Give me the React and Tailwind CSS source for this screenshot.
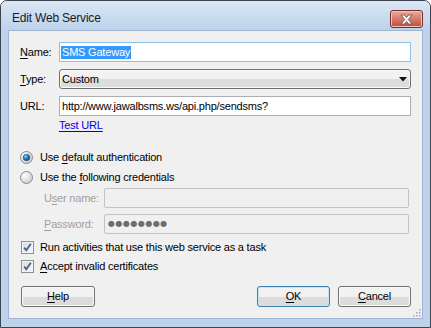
import React from 'react'

const font = { fontFamily: '"Liberation Sans", Arial, sans-serif' }

function U({ children }) {
  return <span className="underline underline-offset-[2px]">{children}</span>
}

function Radio({ checked }) {
  return (
    <svg width="13" height="13" viewBox="0 0 13 13" className="shrink-0">
      <defs>
        <radialGradient id={checked ? 'rg1' : 'rg0'} cx="0.35" cy="0.3" r="0.8">
          <stop offset="0" stopColor="#ffffff" />
          <stop offset="1" stopColor="#c8c8c8" />
        </radialGradient>
        <radialGradient id="dot" cx="0.35" cy="0.3" r="0.8">
          <stop offset="0" stopColor="#8fd3f7" />
          <stop offset="0.5" stopColor="#1a7fc4" />
          <stop offset="1" stopColor="#0b3f6e" />
        </radialGradient>
      </defs>
      <circle cx="6.5" cy="6.5" r="6" fill={`url(#${checked ? 'rg1' : 'rg0'})`} stroke="#8a8a8a" strokeWidth="1" />
      {checked && <circle cx="6.5" cy="6.5" r="3.3" fill="url(#dot)" stroke="#164a78" strokeWidth="0.6" />}
    </svg>
  )
}

function Check() {
  return (
    <svg width="13" height="13" viewBox="0 0 13 13" className="shrink-0">
      <defs>
        <linearGradient id="cb" x1="0" y1="0" x2="1" y2="1">
          <stop offset="0" stopColor="#dcdcdc" />
          <stop offset="1" stopColor="#f6f6f6" />
        </linearGradient>
      </defs>
      <rect x="0.5" y="0.5" width="12" height="12" fill="#f4f4f4" stroke="#8e8f8f" />
      <rect x="2" y="2" width="9" height="9" fill="url(#cb)" />
      <path d="M3.2 6.6 L5.3 9.2 L9.8 2.8" fill="none" stroke="#4a5f97" strokeWidth="1.8" />
    </svg>
  )
}

function Button({ children, def, className = '' }) {
  return (
    <div
      className={`flex h-[21px] w-[73px] items-center justify-center rounded-[3px] border bg-gradient-to-b from-[#f2f2f2] from-50% to-[#dcdcdc] to-50% text-[11px] tracking-[-0.2px] text-black ${
        def ? 'border-[#3c7fb1] shadow-[inset_0_0_0_1px_#bfe5f7]' : 'border-[#707070] shadow-[inset_0_0_0_1px_#fbfbfb]'
      } ${className}`}
    >
      {children}
    </div>
  )
}

export default function App() {
  return (
    <div className="h-[328px] w-[431px] bg-white" style={font}>
      <div className="flex h-full flex-col rounded-t-[7px] border border-[#3d4650] bg-[#bdd2eb] px-[7px] pb-[8px]">
        {/* Title bar */}
        <div className="-mx-[7px] flex h-[29px] shrink-0 items-start justify-between rounded-t-[6px] bg-gradient-to-b from-[#dbe7f5] to-[#bdd2eb] pl-[11px] pr-[7px]">
          <span className="mt-[10px] text-[12px] leading-[14px] tracking-[-0.2px] text-[#1b1b1b]">Edit Web Service</span>
          <div className="mt-[9px] flex h-[18px] w-[33px] items-center justify-center rounded-[3px] border border-[#6e2f2a] bg-gradient-to-b from-[#e9ab9e] via-[#d47a6b] to-[#c24a3c] shadow-[inset_0_0_0_1px_#f1c4b8]">
            <svg width="13" height="11" viewBox="0 0 13 11">
              <path
                d="M1 1 H4.5 L6.5 3.6 L8.5 1 H12 L8.3 5.5 L12 10 H8.5 L6.5 7.4 L4.5 10 H1 L4.7 5.5 Z"
                fill="#ffffff"
                stroke="#5d5d5d"
                strokeWidth="0.9"
                strokeLinejoin="round"
              />
            </svg>
          </div>
        </div>

        {/* Client area */}
        <div className="relative flex flex-1 flex-col border border-[#9fb5cf] bg-[#f0f0f0] pl-[11px] pr-[11px] pt-[11px] text-[11px] tracking-[-0.2px] text-black">
          <div className="flex h-[20px] items-center">
            <span className="w-[39px] shrink-0">
              <U>N</U>ame:
            </span>
            <div className="flex h-full flex-1 items-center border border-[#8fc0e6] bg-white pl-[1px]">
              <span className="bg-[#3399ff] px-[1px] leading-[13px] text-white">SMS Gateway</span>
            </div>
          </div>

          <div className="mt-[7px] flex h-[20px] items-center">
            <span className="w-[39px] shrink-0">
              <U>T</U>ype:
            </span>
            <div className="flex h-full flex-1 items-center justify-between rounded-[3px] border border-[#707070] bg-gradient-to-b from-[#f2f2f2] from-50% to-[#dcdcdc] to-50% pl-[2px] pr-[3px] shadow-[inset_0_0_0_1px_#fbfbfb]">
              <span>Custom</span>
              <svg width="8" height="5" viewBox="0 0 8 5">
                <path d="M0 0 H8 L4 4.5 Z" fill="#111" />
              </svg>
            </div>
          </div>

          <div className="mt-[7px] flex h-[20px] items-center">
            <span className="w-[39px] shrink-0">URL:</span>
            <div className="flex h-full flex-1 items-center border border-[#abadb3] bg-white pl-[2px]">
              <span>http://www.jawalbsms.ws/api.php/sendsms?</span>
            </div>
          </div>

          <div className="ml-[39px] mt-[2px] leading-[14px]">
            <span className="text-[#0000ee] underline underline-offset-[2px]">Test URL</span>
          </div>

          <div className="mt-[17px] flex h-[16px] items-center">
            <Radio checked />
            <span className="ml-[7px]">
              Use <U>d</U>efault authentication
            </span>
          </div>
          <div className="mt-[4px] flex h-[16px] items-center">
            <Radio />
            <span className="ml-[7px]">
              Use the <U>f</U>ollowing credentials
            </span>
          </div>

          <div className="mr-[2px] mt-[3px] flex h-[20px] items-center">
            <span className="ml-[24px] w-[60px] shrink-0 text-[#a0a0a0]">
              U<U>s</U>er name:
            </span>
            <div className="h-full flex-1 rounded-[2px] border border-[#c3c3c3] bg-[#f0f0f0]" />
          </div>
          <div className="mr-[2px] mt-[6px] flex h-[20px] items-center">
            <span className="ml-[24px] w-[60px] shrink-0 text-[#a0a0a0]">
              <U>P</U>assword:
            </span>
            <div className="flex h-full flex-1 items-center rounded-[2px] border border-[#c3c3c3] bg-[#f0f0f0] pl-[3px]">
              <span className="text-[8px] leading-none tracking-[0.5px] text-[#6d6d6d]" style={{ fontFamily: '"DejaVu Sans", sans-serif' }}>
                ●●●●●●●●
              </span>
            </div>
          </div>

          <div className="ml-[1px] mt-[5px] flex h-[16px] items-center">
            <Check />
            <span className="ml-[6px]">Run activities that use this web service as a task</span>
          </div>
          <div className="ml-[1px] mt-[3px] flex h-[16px] items-center">
            <Check />
            <span className="ml-[6px]">
              <U>A</U>ccept invalid certificates
            </span>
          </div>

          <div className="mt-[12px] flex items-center">
            <Button className="ml-[1px] w-[74px]">
              <U>H</U>elp
            </Button>
            <div className="flex-1" />
            <Button def>
              <U>O</U>K
            </Button>
            <Button className="ml-[8px]">
              <U>C</U>ancel
            </Button>
          </div>

          <svg width="9" height="9" viewBox="0 0 9 9" className="absolute bottom-[1px] right-[1px]">
            {[
              [7, 1],
              [4, 4],
              [7, 4],
              [1, 7],
              [4, 7],
              [7, 7],
            ].map(([x, y], i) => (
              <rect key={i} x={x} y={y} width="1.5" height="1.5" fill="#a8a8a8" />
            ))}
          </svg>
        </div>
      </div>
    </div>
  )
}
